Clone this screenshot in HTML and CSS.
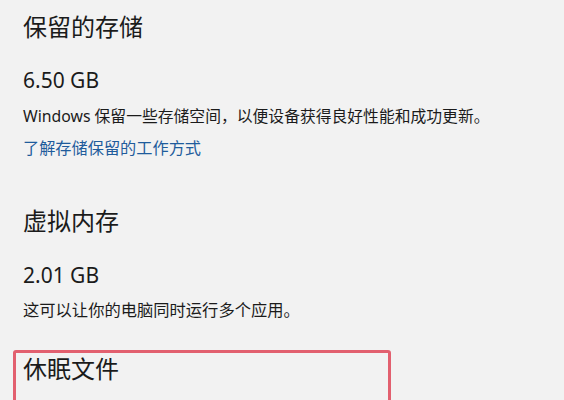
FILE: index.html
```html
<!DOCTYPE html>
<html lang="zh-CN">
<head>
<meta charset="utf-8">
<title>存储</title>
<link rel="stylesheet" href="styles.css">
</head>
<body>
<main class="page">
  <section class="group">
    <h2 class="title">保留的存储</h2>
    <div class="size">6.50 GB</div>
    <p class="desc">Windows 保留一些存储空间，以便设备获得良好性能和成功更新。</p>
    <a class="link" href="#">了解存储保留的工作方式</a>
  </section>
  <section class="group group-second">
    <h2 class="title">虚拟内存</h2>
    <div class="size">2.01 GB</div>
    <p class="desc">这可以让你的电脑同时运行多个应用。</p>
  </section>
  <section class="group highlight">
    <h2 class="title">休眠文件</h2>
  </section>
</main>
</body>
</html>
```

FILE: styles.css
```css
html, body {
  margin: 0;
  padding: 0;
  background: #f2f2f2;
}
body {
  font-family: "Noto Sans", "Noto Sans CJK SC", sans-serif;
  color: #1b1b1b;
  width: 564px;
  height: 400px;
  overflow: hidden;
}
.page {
  padding: 11px 0 0 23px;
  display: flex;
  flex-direction: column;
}
.group {
  display: flex;
  flex-direction: column;
  align-items: flex-start;
}
.title {
  margin: 0;
  font-size: 24px;
  line-height: 32px;
  font-weight: 400;
}
.size {
  margin-top: 23px;
  font-size: 21px;
  line-height: 28px;
}
.desc {
  margin: 10px 0 0;
  font-size: 15.8px;
  line-height: 24px;
}
.link {
  margin-top: 8px;
  font-size: 16.2px;
  line-height: 24px;
  color: #1f5c9c;
  text-decoration: none;
}
.group-second {
  margin-top: 45px;
}
.group-second .size {
  margin-top: 24px;
}
.group-second .desc {
  margin-top: 9px;
  font-size: 16.3px;
}
.highlight {
  margin: 28px 0 0 -10px;
  width: 365px;
  height: 100px;
  border: 3px solid #e2606f;
  border-radius: 3px;
  padding: 0 0 0 7px;
}
```
